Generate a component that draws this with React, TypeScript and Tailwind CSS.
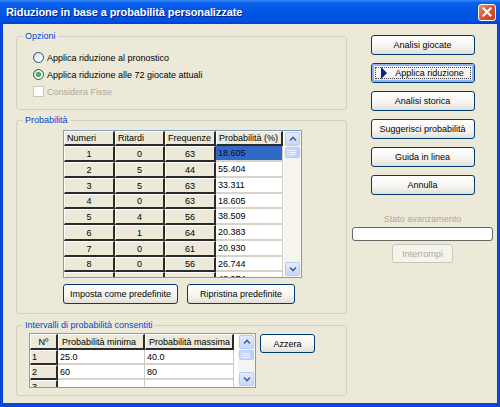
import React from "react";

const FIXED =
  "flex shrink-0 items-center bg-[#ece9d8] border-t border-l border-b-2 border-r-2 border-t-white border-l-white border-b-[#2a2a2a] border-r-[#2a2a2a]";
const WHITE_BASE =
  "flex shrink-0 items-center pl-[2px] border-b-2 border-r border-b-[#d6d3cb] border-r-[#cfccc4]";

function Chevron({ down }: { down?: boolean }) {
  return (
    <svg width="8" height="6" viewBox="0 0 8 6">
      <polyline
        points={down ? "1,1.5 4,4.5 7,1.5" : "1,4.5 4,1.5 7,4.5"}
        fill="none"
        stroke="#4d6185"
        strokeWidth="1.6"
      />
    </svg>
  );
}

function ScrollBtn({ down }: { down?: boolean }) {
  return (
    <div className="mx-auto flex h-[14px] w-[15px] shrink-0 items-center justify-center rounded-[2px] border border-[#b9ccf4] bg-[linear-gradient(to_bottom,#e3ecff_0%,#c6d6fb_100%)]">
      <Chevron down={down} />
    </div>
  );
}

function Scrollbar({ thumb }: { thumb: number }) {
  return (
    <div className="flex w-[17px] shrink-0 flex-col bg-[#f5f4ef] py-[1px]">
      <ScrollBtn />
      <div
        className="mx-auto mt-[1px] flex w-[15px] shrink-0 flex-col items-center justify-center gap-[1px] rounded-[2px] border border-[#b9ccf4] bg-[linear-gradient(to_right,#cddcfd_0%,#bccffa_100%)]"
        style={{ height: thumb }}
      >
        <div className="h-[1px] w-[7px] bg-[#eef3ff]" />
        <div className="h-[1px] w-[7px] bg-[#eef3ff]" />
        <div className="h-[1px] w-[7px] bg-[#eef3ff]" />
      </div>
      <div className="flex-1" />
      <ScrollBtn down />
    </div>
  );
}

function XPButton({
  children,
  className = "",
  disabled,
  isDefault,
}: {
  children: React.ReactNode;
  className?: string;
  disabled?: boolean;
  isDefault?: boolean;
}) {
  if (disabled) {
    return (
      <div className={`flex shrink-0 items-center justify-center rounded-[3px] border border-[#c9c7ba] bg-[#f5f4ea] text-[#aca899] ${className}`}>
        {children}
      </div>
    );
  }
  if (isDefault) {
    return (
      <div className={`flex shrink-0 rounded-[3px] border border-[#003c74] bg-[linear-gradient(to_bottom,#ffffff_0%,#f5f4f0_60%,#e2dfd6_100%)] ${className}`}>
        <div className="flex flex-1 rounded-[2px] border-2 border-[#8fb3ec] p-[1px]">
          <div className="flex flex-1 items-center justify-center border border-dotted border-[#444]">
            {children}
          </div>
        </div>
      </div>
    );
  }
  return (
    <div className={`flex shrink-0 items-center justify-center rounded-[3px] border border-[#003c74] bg-[linear-gradient(to_bottom,#ffffff_0%,#f5f4f0_60%,#e2dfd6_100%)] ${className}`}>
      {children}
    </div>
  );
}

function Radio({ checked, label }: { checked?: boolean; label: string }) {
  return (
    <div className="flex h-[17px] items-center">
      <span className="flex h-[11px] w-[11px] items-center justify-center rounded-full border border-[#1c5180] bg-[linear-gradient(135deg,#d6d5cd_0%,#ffffff_80%)]">
        {checked && <span className="h-[5px] w-[5px] rounded-full bg-[radial-gradient(circle,#5fd35f_0%,#21a121_70%)]" />}
      </span>
      <span className="ml-[3px]">{label}</span>
    </div>
  );
}

function Group({
  title,
  children,
  className = "",
}: {
  title: string;
  children: React.ReactNode;
  className?: string;
}) {
  return (
    <fieldset className={`m-0 min-w-0 rounded-[3px] border border-[#d0d0bf] p-0 ${className}`}>
      <legend className="ml-[6px] px-[2px] leading-[12px] text-[#0046d5]">{title}</legend>
      {children}
    </fieldset>
  );
}

const probRows = [
  ["1", "0", "63", "18.605", 16],
  ["2", "5", "44", "55.404", 16],
  ["3", "5", "63", "33.311", 16],
  ["4", "0", "63", "18.605", 15],
  ["5", "4", "56", "38.509", 16],
  ["6", "1", "64", "20.383", 16],
  ["7", "0", "61", "20.930", 16],
  ["8", "0", "56", "26.744", 15],
  ["9", "4", "47", "48.974", 16],
] as const;

const intRows = [
  ["1", "25.0", "40.0"],
  ["2", "60", "80"],
  ["3", "", ""],
];

export default function App() {
  return (
    <div className="flex h-[407px] w-[500px] flex-col overflow-hidden bg-[#0842d6] font-['Liberation_Sans','Arial',sans-serif] text-[9px] leading-[12px] text-black">
      {/* Title bar */}
      <div className="flex h-[24px] shrink-0 items-center bg-[linear-gradient(to_bottom,#3b8cf7_0%,#0a5eec_12%,#0054e3_55%,#0052e6_85%,#0040cc_100%)] pl-[6px] pr-[4px]">
        <span className="flex-1 text-[11px] font-bold tracking-[-0.1px] text-white [text-shadow:1px_1px_0_#0a1e80]">
          Riduzione in base a probabilità personalizzate
        </span>
        <div className="flex h-[17px] w-[18px] items-center justify-center rounded-[3px] border border-white bg-[linear-gradient(135deg,#e98c6e_0%,#d9522e_55%,#c73e1d_100%)]">
          <svg width="10" height="10" viewBox="0 0 10 10">
            <path d="M1.5 1.5 L8.5 8.5 M8.5 1.5 L1.5 8.5" stroke="white" strokeWidth="2" strokeLinecap="square" />
          </svg>
        </div>
      </div>

      {/* Body */}
      <div className="flex flex-1 border-x-[3px] border-b-[4px] border-x-[#0a45d8] border-b-[#0a45d8] bg-[#ece9d8]">
        {/* Left column */}
        <div className="ml-[13px] flex w-[331px] flex-col pt-[6px]">
          <Group title="Opzioni">
            <div className="flex flex-col pb-[9px] pl-[16px] pt-[7px]">
              <Radio label="Applica riduzione al pronostico" />
              <Radio checked label="Applica riduzione alle 72 giocate attuali" />
              <div className="flex h-[17px] items-center text-[#aca899]">
                <span className="h-[11px] w-[11px] border border-[#cac8bb] bg-white" />
                <span className="ml-[3px]">Considera Fisse</span>
              </div>
            </div>
          </Group>

          <Group title="Probabilità" className="mt-[4px]">
            <div className="flex flex-col pb-[9px] pl-[46px] pt-[4px]">
              <div className="flex h-[148px] w-[239px] border border-[#7f9db9] bg-white">
                <div className="flex w-[219px] flex-col overflow-hidden">
                  <div className="flex h-[15px] shrink-0">
                    <div className={`${FIXED} w-[51px] pl-[2px]`}>Numeri</div>
                    <div className={`${FIXED} w-[50px] pl-[2px]`}>Ritardi</div>
                    <div className={`${FIXED} w-[51px] pl-[2px]`}>Frequenze</div>
                    <div className={`${FIXED} w-[67px] pl-[2px]`}>Probabilità (%)</div>
                  </div>
                  {probRows.map((r, i) => (
                    <div key={i} className="flex shrink-0" style={{ height: r[4] }}>
                      <div className={`${FIXED} w-[51px] justify-center`}>{r[0]}</div>
                      <div className={`${FIXED} w-[50px] justify-center`}>{r[1]}</div>
                      <div className={`${FIXED} w-[51px] justify-center`}>{r[2]}</div>
                      <div className={`${WHITE_BASE} w-[67px] ${i === 0 ? "bg-[#316ac5] text-[#0a0a30]" : "bg-white"}`}>{r[3]}</div>
                    </div>
                  ))}
                </div>
                <div className="w-[1px]" />
                <Scrollbar thumb={11} />
              </div>
              <div className="mt-[6px] flex gap-[9px]">
                <XPButton className="h-[20px] w-[115px]">Imposta come predefinite</XPButton>
                <XPButton className="h-[20px] w-[108px]">Ripristina predefinite</XPButton>
              </div>
            </div>
          </Group>

          <Group title="Intervalli di probabilità consentiti" className="mt-[5px]">
            <div className="flex items-start pb-[7px] pl-[12px] pt-[2px]">
              <div className="flex h-[55px] w-[227px] border border-[#7f9db9] bg-white">
                <div className="flex w-[204px] flex-col overflow-hidden">
                  <div className="flex h-[16px] shrink-0">
                    <div className={`${FIXED} w-[28px] justify-center`}>Nº</div>
                    <div className={`${FIXED} w-[87px] pl-[3px]`}>Probabilità minima</div>
                    <div className={`${FIXED} w-[89px] pl-[3px]`}>Probabilità massima</div>
                  </div>
                  {intRows.map((r, i) => (
                    <div key={i} className="flex h-[15px] shrink-0">
                      <div className={`${FIXED} w-[28px] pl-[1px]`}>{r[0]}</div>
                      <div className={`${WHITE_BASE} w-[87px] bg-white`}>{r[1]}</div>
                      <div className={`${WHITE_BASE} w-[89px] bg-white`}>{r[2]}</div>
                    </div>
                  ))}
                </div>
                <div className="w-[4px]" />
                <Scrollbar thumb={10} />
              </div>
              <XPButton className="ml-[4px] mt-[1px] h-[19px] w-[55px]">Azzera</XPButton>
            </div>
          </Group>
        </div>

        {/* Right column */}
        <div className="ml-[5px] flex w-[141px] flex-col items-center pt-[11px]">
          <div className="flex flex-col gap-[8px]">
            <XPButton className="h-[20px] w-[104px]">Analisi giocate</XPButton>
            <XPButton isDefault className="h-[20px] w-[104px]">
              <svg width="6" height="12" viewBox="0 0 6 12" className="mr-[8px]">
                <polygon points="0,0 6,6 0,12" fill="#0b1f9e" />
              </svg>
              <span>Applica riduzione</span>
            </XPButton>
            <XPButton className="h-[20px] w-[104px]">Analisi storica</XPButton>
            <XPButton className="h-[20px] w-[104px]">Suggerisci probabilità</XPButton>
            <XPButton className="h-[20px] w-[104px]">Guida in linea</XPButton>
            <XPButton className="h-[20px] w-[104px]">Annulla</XPButton>
          </div>
          <div className="mt-[18px] text-[#aca899]">Stato avanzamento</div>
          <div className="mt-[2px] h-[14px] w-[141px] rounded-[3px] border border-[#686868] bg-white" />
          <XPButton disabled className="mt-[3px] h-[19px] w-[61px]">Interrompi</XPButton>
        </div>
      </div>
    </div>
  );
}
